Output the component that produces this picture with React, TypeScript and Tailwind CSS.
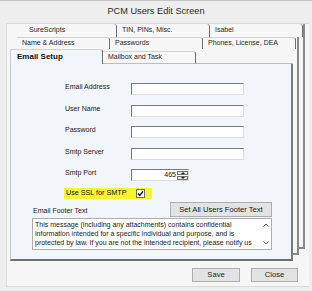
import React from 'react';

const FONT = { fontFamily: '"Liberation Sans", Arial, sans-serif' };

const Tab: React.FC<{ label: string; className?: string }> = ({ label, className = '' }) => (
  <div
    className={`w-[93px] shrink-0 flex items-center pl-[5px] text-[7px] text-[#1e1e1e] bg-[#f7f7f7] border-r border-[#6e6e6e] rounded-tr-[3px] ${className}`}
  >
    {label}
  </div>
);

const Field: React.FC<{ label: string; children?: React.ReactNode }> = ({ label, children }) => (
  <div className="flex items-start h-[12px]">
    <div className="w-[66px] text-[7px] leading-[8px] text-[#202020]">{label}</div>
    {children ?? (
      <div className="w-[113px] h-[12px] bg-white border border-t-[#7a7a7a] border-l-[#7a7a7a] border-r-[#dedede] border-b-[#dedede]" />
    )}
  </div>
);

export default function App() {
  return (
    <div className="w-[312px] h-[291px] overflow-hidden bg-[#eeeeee] border-t border-[#c4c4c4]" style={FONT}>
      {/* Title */}
      <div className="h-[22px] flex items-center justify-center text-[9.2px] text-[#2a2a2a]">
        PCM Users Edit Screen
      </div>

      <div className="ml-[6px] w-[303px] h-[264px] bg-[#f6f6f6] border-l border-t border-b border-[#dadada]">
        {/* Page 1 (back) */}
        <div className="ml-[17px] w-[281px] border-r-2 border-b-2 border-[#8a8a8a]">
          <div className="flex h-[13px]">
            <Tab label="SureScripts" />
            <Tab label="TIN, PINs, Misc." />
            <Tab label="Isabel" />
          </div>

          {/* Page 2 */}
          <div className="-ml-[7px] w-[282px] mb-[-8px] border-r-2 border-b-2 border-[#8a8a8a] bg-[#f6f6f6]">
            <div className="flex h-[12px]">
              <Tab label="Name & Address" className="border-t border-t-[#d2d2d2]" />
              <Tab label="Passwords" className="border-t border-t-[#d2d2d2]" />
              <Tab label="Phones, License, DEA" className="border-t border-t-[#d2d2d2]" />
            </div>

            {/* Page 3 (active) */}
            <div className="-ml-[7px] w-[283px] mb-[-8px]">
              <div className="flex h-[15px]">
                <div className="w-[93px] shrink-0 flex items-center pl-[6px] text-[8px] font-bold text-[#111] bg-[#f2f5fa] border-t border-l border-[#cfcfcf] border-r border-r-[#6e6e6e] rounded-tr-[3px]">
                  Email Setup
                </div>
                <div className="w-[93px] shrink-0 mt-[2px] flex items-center pl-[5px] text-[7px] text-[#1e1e1e] bg-[#f7f7f7] border-t border-[#d2d2d2] border-r border-r-[#6e6e6e] border-b border-b-[#bdbdbd] rounded-tr-[3px]">
                  Mailbox and Task
                </div>
                <div className="flex-1 border-b border-[#bdbdbd] bg-[#f6f6f6]" />
              </div>

              <div className="h-[197px] bg-[#f2f5fa] border-l border-[#c4c4c4] border-r-2 border-r-[#7a7a7a] border-b-2 border-b-[#6f6f6f] flex flex-col">
                <div className="ml-[54px] mt-[19px] flex flex-col gap-[9.5px]">
                  <Field label="Email Address" />
                  <Field label="User Name" />
                  <Field label="Password" />
                  <Field label="Smtp Server" />
                  <Field label="Smtp Port">
                    <div className="w-[58px] h-[12px] bg-white border border-t-[#7a7a7a] border-l-[#7a7a7a] border-r-[#dedede] border-b-[#dedede] flex">
                      <div className="flex-1 text-right text-[7px] leading-[10px] pr-[1px] text-[#111]">465</div>
                      <div className="w-[11px] flex flex-col gap-[1px] py-[1px]">
                        <div className="flex-1 bg-[#e8e8e8] border border-[#707070] flex items-center justify-center">
                          <div className="w-0 h-0 border-l-[2px] border-r-[2px] border-b-[2px] border-l-transparent border-r-transparent border-b-[#222]" />
                        </div>
                        <div className="flex-1 bg-[#e8e8e8] border border-[#707070] flex items-center justify-center">
                          <div className="w-0 h-0 border-l-[2px] border-r-[2px] border-t-[2px] border-l-transparent border-r-transparent border-t-[#222]" />
                        </div>
                      </div>
                    </div>
                  </Field>
                </div>

                {/* SSL */}
                <div className="ml-[53px] mt-[7px] w-[88px] h-[11px] bg-[#f7f52c] flex items-center pl-[2px]">
                  <span className="text-[7.2px] text-[#111]">Use SSL for SMTP</span>
                  <div className="ml-[10px] w-[9px] h-[9px] bg-white border border-[#6d6d6d] flex items-center justify-center">
                    <svg width="7" height="7" viewBox="0 0 7 7">
                      <path d="M1 3.6 L2.8 5.4 L6 1.4" fill="none" stroke="#111" strokeWidth="1.4" />
                    </svg>
                  </div>
                </div>

                {/* Footer */}
                <div className="mt-[3px] ml-[22px] w-[239px] flex items-end justify-between">
                  <span className="text-[7px] leading-[8px] pb-[2px] text-[#202020]">Email Footer Text</span>
                  <div className="w-[102px] h-[15px] bg-[#e3e3e3] border border-[#adadad] flex items-center justify-center text-[7.6px] text-[#1a1a1a]">
                    Set All Users Footer Text
                  </div>
                </div>
                <div className="mt-[1px] ml-[21px] w-[240px] h-[32px] bg-white border border-[#adadad] flex">
                  <div className="flex-1 overflow-hidden pl-[2px] pt-[1px] text-[7px] leading-[9px] text-[#1a1a1a] whitespace-nowrap">
                    <div>This message (including any attachments) contains confidential</div>
                    <div>information intended for a specific individual and purpose, and is</div>
                    <div>protected by law. If you are not the intended recipient, please notify us</div>
                  </div>
                  <div className="w-[10px] flex flex-col items-center justify-between py-[4px]">
                    <svg width="6" height="4" viewBox="0 0 6 4">
                      <path d="M0.5 3.5 L3 1 L5.5 3.5" fill="none" stroke="#555" strokeWidth="1" />
                    </svg>
                    <svg width="6" height="4" viewBox="0 0 6 4">
                      <path d="M0.5 0.5 L3 3 L5.5 0.5" fill="none" stroke="#555" strokeWidth="1" />
                    </svg>
                  </div>
                </div>
              </div>
            </div>
          </div>
        </div>

        {/* Buttons */}
        <div className="mt-[19px] flex justify-end gap-[11px] pr-[11px]">
          <div className="w-[48px] h-[14px] bg-[#e3e3e3] border border-[#adadad] flex items-center justify-center text-[7.6px] text-[#1a1a1a]">
            Save
          </div>
          <div className="w-[47px] h-[14px] bg-[#e3e3e3] border border-[#adadad] flex items-center justify-center text-[7.6px] text-[#1a1a1a]">
            Close
          </div>
        </div>
      </div>
    </div>
  );
}
